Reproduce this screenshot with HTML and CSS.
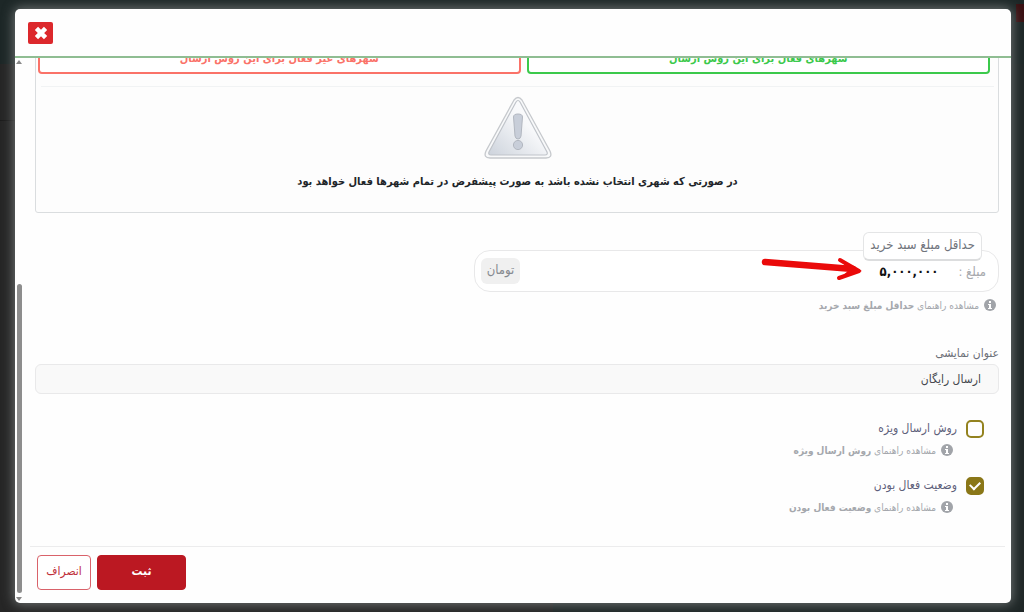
FILE: index.html
```html
<!DOCTYPE html>
<html lang="fa" dir="rtl">
<head>
  <meta charset="UTF-8" />
  <meta name="viewport" content="width=device-width, initial-scale=1" />
  <title>روش ارسال</title>
  <link rel="stylesheet" href="styles.css">
</head>
<body>
  <div class="modal">
    <header class="modal-header">
      <button type="button" class="close-btn" aria-label="بستن">
        <svg viewBox="0 0 14 14"><path d="M3 3l8 8M11 3l-8 8" stroke="#fff" stroke-width="4"/></svg>
      </button>
    </header>

    <div class="modal-main">
      <form class="modal-body">
        <section class="cities">
          <div class="tabs">
            <button type="button" class="tab tab-active">شهرهای فعال برای این روش ارسال</button>
            <button type="button" class="tab tab-inactive">شهرهای غیر فعال برای این روش ارسال</button>
          </div>
          <div class="cities-empty">
            <svg class="warning" viewBox="0 0 68 64">
              <defs>
                <linearGradient id="warnFill" x1="0" y1="1" x2="1" y2="0">
                  <stop offset="0" stop-color="#cdd3dc"/>
                  <stop offset="0.6" stop-color="#f7f8fa"/>
                  <stop offset="1" stop-color="#fff"/>
                </linearGradient>
              </defs>
              <path d="M30 4q4-5 8 0l28 51q3 7-4 7H6q-7 0-4-7z" fill="#f8f9fa" stroke="#c6c9cd" stroke-width="1.3"/>
              <path d="M32 6q2-3 4 0l27 50q1 3-2 3H7q-3 0-2-3z" fill="url(#warnFill)" stroke="#c0c4ca" stroke-width="1.2"/>
              <path d="M29.500 21q0-3 4.500-3t4.500 3l-1.500 19q-.5 3-3 3t-3-3z" fill="#c8ced9" stroke="#b2b7c0"/>
              <circle cx="34" cy="49" r="4.600" fill="#c8ced9" stroke="#b2b7c0"/>
            </svg>
            <p>در صورتی که شهری انتخاب نشده باشد به صورت پیشفرض در تمام شهرها فعال خواهد بود</p>
          </div>
        </section>

        <div class="amount">
          <label class="amount-title" for="minAmount">حداقل مبلغ سبد خرید</label>
          <span class="amount-prefix">مبلغ :</span>
          <input type="text" id="minAmount" value="۵,۰۰۰,۰۰۰" />
          <span class="unit">تومان</span>
          <svg class="arrow" viewBox="0 0 104 28">
            <path d="M4 7L92 14" fill="none" stroke="#ea0a0a" stroke-width="6.500" stroke-linecap="round"/>
            <path d="M79 5L98 16L78 23" fill="none" stroke="#ea0a0a" stroke-width="4" stroke-linecap="round" stroke-linejoin="round"/>
            <path d="M80 6L101 16L79 23L88 15z" fill="#ea0a0a"/>
          </svg>
        </div>
        <a href="#" class="help">
          <svg viewBox="0 0 12 12"><circle cx="6" cy="6" r="6"/><path d="M5 2h2v2H5zM4 5h3v4h1v1H4V9h1V6H4z" fill="#fff"/></svg>
          <span>مشاهده راهنمای <b>حداقل مبلغ سبد خرید</b></span>
        </a>

        <label class="field-label" for="displayTitle">عنوان نمایشی</label>
        <input type="text" class="field-input" id="displayTitle" value="ارسال رایگان" />

        <div class="check">
          <input type="checkbox" id="special" />
          <label for="special">روش ارسال ویژه</label>
          <a href="#" class="help">
            <svg viewBox="0 0 12 12"><circle cx="6" cy="6" r="6"/><path d="M5 2h2v2H5zM4 5h3v4h1v1H4V9h1V6H4z" fill="#fff"/></svg>
            <span>مشاهده راهنمای <b>روش ارسال ویژه</b></span>
          </a>
        </div>
        <div class="check">
          <input type="checkbox" id="enabled" checked />
          <label for="enabled">وضعیت فعال بودن</label>
          <a href="#" class="help">
            <svg viewBox="0 0 12 12"><circle cx="6" cy="6" r="6"/><path d="M5 2h2v2H5zM4 5h3v4h1v1H4V9h1V6H4z" fill="#fff"/></svg>
            <span>مشاهده راهنمای <b>وضعیت فعال بودن</b></span>
          </a>
        </div>

        <div class="actions">
          <button type="submit" class="btn btn-save">ثبت</button>
          <button type="button" class="btn btn-cancel">انصراف</button>
        </div>
      </form>

      <div class="scrollbar">
        <span class="scroll-up"></span>
        <span class="scroll-track"></span>
        <span class="scroll-thumb"></span>
        <span class="scroll-down"></span>
      </div>
    </div>
  </div>
</body>
</html>
```

FILE: styles.css
```css
* {
  box-sizing: border-box;
}

body {
  margin: 0;
  height: 100vh;
  padding: 9px 13px 9px 15px;
  background:
    linear-gradient(#3a1012, #3a1012) right 4px / 8px 18px no-repeat,
    linear-gradient(#1c1c1c, #1c1c1c) left 120px / 15px 1px no-repeat,
    linear-gradient(#1d2727, #1d2727) top / 100% 64px no-repeat,
    linear-gradient(to right, #262626 54%, #1f2727 54%);
  font-family: "DejaVu Sans Condensed", "DejaVu Sans", sans-serif;
  font-size: 12px;
  color: #212529;
  overflow: hidden;
}

button,
input {
  font-family: inherit;
  font-size: inherit;
}

.modal {
  height: 100%;
  display: flex;
  flex-direction: column;
  background: #fefefe;
  border-radius: 5px;
  box-shadow: 0 0 12px 1px #737777;
  overflow: hidden;
}

.modal-header {
  flex: none;
  height: 49px;
  padding: 0 13px;
  display: flex;
  align-items: center;
  justify-content: flex-end;
  border-bottom: 2px solid #8fbd92;
}

.close-btn {
  width: 25px;
  height: 22px;
  padding: 0;
  display: flex;
  align-items: center;
  justify-content: center;
  background: #dc282c;
  border: 0;
  border-radius: 2px;
}

.close-btn svg {
  width: 16px;
  height: 16px;
}

.modal-main {
  flex: 1;
  min-height: 0;
  display: flex;
}

/* content is kept scrolled to the end */
.modal-body {
  flex: 1;
  min-width: 0;
  display: flex;
  flex-direction: column;
  justify-content: flex-end;
  padding: 0 12px 13px 12px;
  overflow: hidden;
}

.modal-body > * {
  flex: none;
}

.cities {
  background: #fdfdfd;
  border: 1px solid #dadddf;
  border-radius: 3px;
}

.tabs {
  margin: 0 8px 0 2px;
  display: grid;
  grid-template-columns: 464fr 483fr;
  gap: 6px;
}

.tab {
  height: 32px;
  padding: 0;
  background: #fff;
  border: 2px solid;
  border-radius: 4px;
  font-size: 11px;
  font-weight: bold;
}

.tab-active {
  color: #3bc94b;
}

.tab-inactive {
  color: #fa7268;
}

.cities-empty {
  height: 126px;
  margin: 12px 4px 0 5px;
  padding-top: 9px;
  display: flex;
  flex-direction: column;
  align-items: center;
  border-top: 1px solid #f1f3f4;
  font-size: 11px;
  font-weight: bold;
}

.cities-empty p {
  margin: 12px 0 0;
  line-height: 20px;
}

.warning {
  width: 68px;
  height: 64px;
}

.amount {
  position: relative;
  align-self: flex-start;
  width: 54.5%;
  height: 42px;
  margin-top: 37px;
  padding: 0 12px 0 6px;
  display: flex;
  align-items: center;
  background: #fff;
  border: 1px solid #e8e8e9;
  border-radius: 16px;
}

.amount-title {
  position: absolute;
  top: -19px;
  right: 16px;
  height: 29px;
  padding: 0 6px;
  line-height: 24px;
  background: #fff;
  border: 1px solid #e4e5e6;
  border-bottom: 2px solid #dcddde;
  border-radius: 6px;
  font-size: 13px;
  color: #70747c;
}

.amount-prefix {
  font-size: 13px;
  color: #a7a9ad;
}

.amount input {
  flex: 1;
  min-width: 0;
  padding: 0 20px;
  background: none;
  border: 0;
  font-size: 13px;
  font-weight: bold;
  color: #111;
}

.unit {
  height: 26px;
  padding: 0 6px;
  line-height: 24px;
  background: #f0f0f0;
  border-radius: 6px;
  font-size: 13px;
  color: #85898f;
}

.arrow {
  position: absolute;
  top: 4px;
  right: 133px;
  width: 104px;
  height: 28px;
}

.help {
  display: flex;
  align-items: center;
  gap: 5px;
  height: 14px;
  color: #a5a8ad;
  font-size: 10px;
  text-decoration: none;
}

.help svg {
  width: 12px;
  height: 12px;
  fill: #a1a4a9;
}

.amount + .help {
  margin-top: 6px;
  padding-right: 3px;
}

.field-label {
  margin-top: 33px;
  line-height: 16px;
  color: #6c7078;
}

.field-input {
  height: 30px;
  margin-top: 3px;
  padding: 0 17px;
  background: #f9f9f9;
  border: 1px solid #e9e9ea;
  border-radius: 6px;
  color: #45484e;
}

.check {
  margin-top: 18px;
  padding-right: 15px;
  display: grid;
  grid-template-columns: 18px 1fr;
  column-gap: 9px;
  row-gap: 3px;
  align-items: center;
  color: #5e617b;
}

.field-input + .check {
  margin-top: 24px;
}

.check input {
  appearance: none;
  width: 18px;
  height: 18px;
  margin: 0;
  border: 2px solid #93821f;
  border-radius: 5px;
}

.check input:checked {
  background: #8a7718;
  border-color: #8a7718;
  display: grid;
  place-items: center;
}

.check input:checked::before {
  content: "";
  width: 8px;
  height: 5px;
  margin-bottom: 3px;
  border: solid #fff;
  border-width: 0 0 2px 2px;
  transform: rotate(-45deg);
}

.check label {
  height: 22px;
  line-height: 20px;
}

.check .help {
  grid-column: 2;
  padding-right: 4px;
}

.actions {
  margin: 32px -6px 0 -5px;
  padding: 8px 0 0 7px;
  display: flex;
  justify-content: flex-end;
  gap: 6px;
  border-top: 1px solid #ececed;
}

.btn {
  height: 35px;
  padding: 0 0 3px;
  border: 1px solid #bb1822;
  border-radius: 4px;
}

.btn-save {
  width: 89px;
  background: #bb1822;
  color: #fff;
  font-weight: bold;
}

.btn-cancel {
  width: 54px;
  background: #fff;
  border-color: #d9626a;
  color: #c0303a;
}

.scrollbar {
  flex: none;
  width: 8px;
  padding: 2px 1px;
  display: flex;
  flex-direction: column;
  align-items: center;
}

.scroll-track {
  flex: 220;
}

.scroll-thumb {
  flex: 308;
  width: 5px;
  background: #8d8d8d;
  border-radius: 3px;
}

.scroll-up,
.scroll-down {
  border: 3px solid transparent;
}

.scroll-up {
  border-top: 0;
  border-bottom: 4px solid #888;
}

.scroll-down {
  margin-top: 4px;
  border-bottom: 0;
  border-top: 4px solid #888;
}
```
